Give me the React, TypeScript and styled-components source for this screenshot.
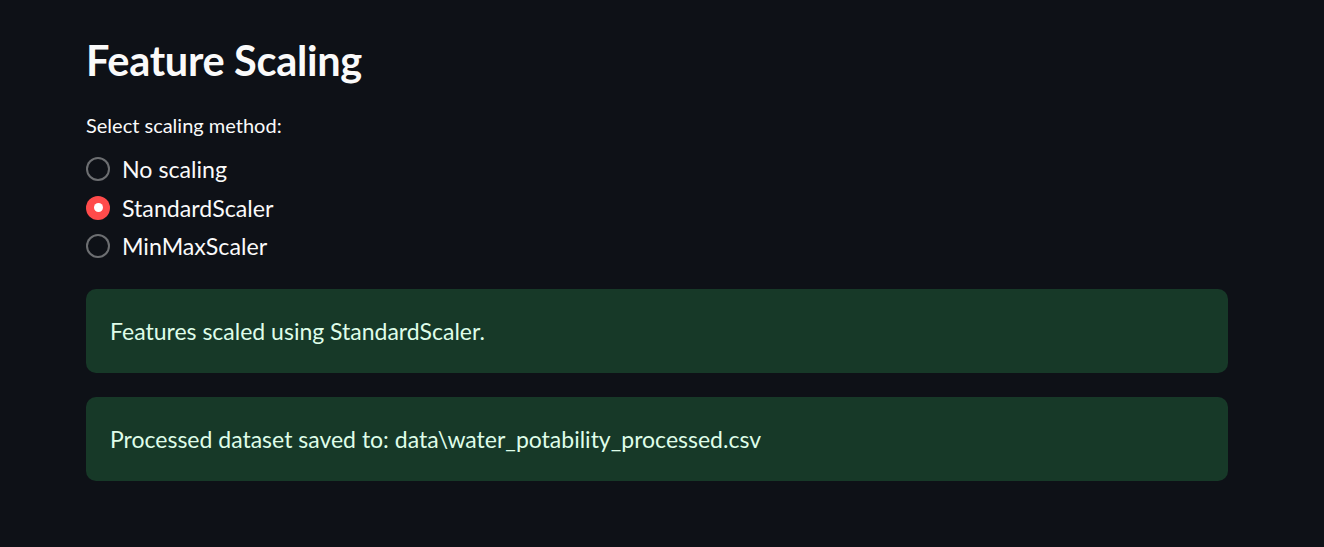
import React, { useState } from "react";
import styled, { createGlobalStyle } from "styled-components";

const Global = createGlobalStyle`
  html, body { margin: 0; padding: 0; background: #0e1117; }
  body { font-family: "Lato", "Noto Sans", sans-serif; color: #fafafa; }
  * { box-sizing: border-box; }
`;

const Page = styled.main`
  min-height: 547px;
  padding: 36px 96px 0 86px;
  display: flex;
  flex-direction: column;
`;

const Title = styled.h2`
  margin: 0;
  font-size: 41.5px;
  line-height: 48px;
  font-weight: 700;
  color: #fafafa;
  letter-spacing: -0.3px;
`;

const Label = styled.div`
  margin-top: 29px;
  font-size: 20px;
  line-height: 24px;
  color: #fafafa;
`;

const RadioGroup = styled.div`
  margin-top: 13px;
  display: flex;
  flex-direction: column;
`;

const Row = styled.label`
  display: flex;
  align-items: center;
  height: 38.5px;
  gap: 12px;
  cursor: pointer;
  font-size: 23.2px;
  color: #fafafa;
`;

const Circle = styled.span<{ $checked: boolean }>`
  width: 24px;
  height: 24px;
  border-radius: 50%;
  display: flex;
  align-items: center;
  justify-content: center;
  background: ${(p) => (p.$checked ? "#ff4b4b" : "#0e1117")};
  border: ${(p) => (p.$checked ? "none" : "2px solid rgba(250,250,250,0.4)")};
  &::after {
    content: "";
    width: 9px;
    height: 9px;
    border-radius: 50%;
    background: #ffffff;
    display: ${(p) => (p.$checked ? "block" : "none")};
  }
`;

const Alerts = styled.div`
  margin-top: 23px;
  display: flex;
  flex-direction: column;
  gap: 24px;
`;

const Alert = styled.div`
  height: 84px;
  border-radius: 10px;
  background: #173928;
  color: #dffde9;
  font-size: 23px;
  display: flex;
  align-items: center;
  padding: 0 24px;
`;

const options = ["No scaling", "StandardScaler", "MinMaxScaler"];

export default function App() {
  const [sel, setSel] = useState("StandardScaler");
  return (
    <>
      <Global />
      <Page>
        <Title>Feature Scaling</Title>
        <Label>Select scaling method:</Label>
        <RadioGroup>
          {options.map((o) => (
            <Row key={o} onClick={() => setSel(o)}>
              <Circle $checked={sel === o} />
              {o}
            </Row>
          ))}
        </RadioGroup>
        <Alerts>
          <Alert>Features scaled using StandardScaler.</Alert>
          <Alert>Processed dataset saved to: data\water_potability_processed.csv</Alert>
        </Alerts>
      </Page>
    </>
  );
}
